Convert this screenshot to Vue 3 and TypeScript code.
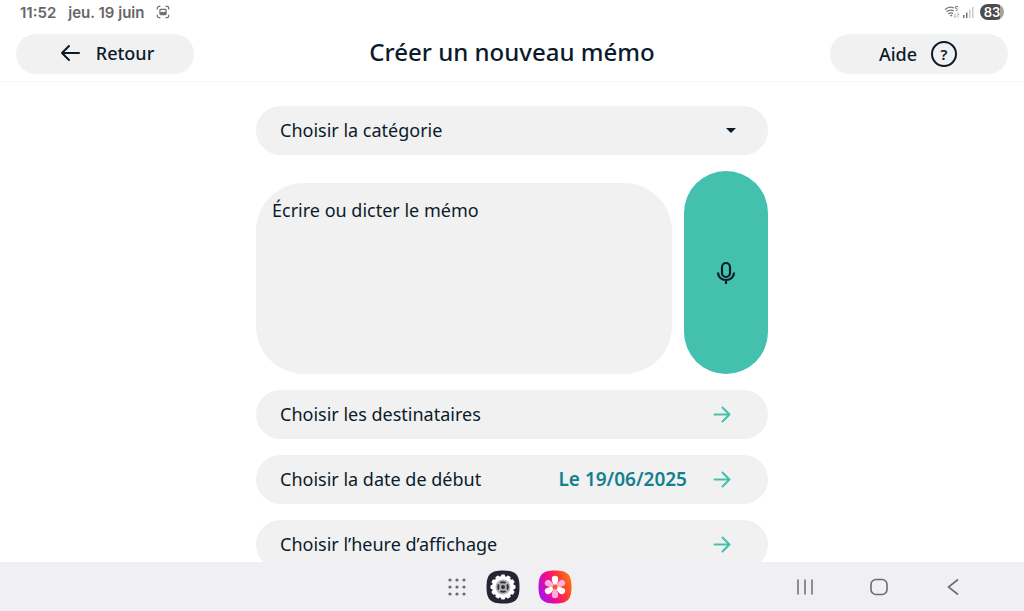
<script setup lang="ts">
import { ref } from 'vue'

interface Step {
  id: string
  label: string
  value?: string
}

const category = ref('')
const memo = ref('')
const categories = ['Rendez-vous', 'Médicaments', 'Courses']
const steps: Step[] = [
  { id: 'recipients', label: 'Choisir les destinataires' },
  { id: 'date', label: 'Choisir la date de début', value: 'Le 19/06/2025' },
  { id: 'time', label: 'Choisir l’heure d’affichage' },
]
const teeth = Array.from({ length: 12 }, (_, i) => i * 30)
const petals = Array.from({ length: 6 }, (_, i) => i * 60)
</script>

<template>
  <div class="screen">
    <div class="status">
      <span>11:52</span>
      <span class="day">jeu. 19 juin</span>
      <svg class="capture" width="14" height="14" viewBox="0 0 16 16" fill="none" stroke="#6d6d6d" stroke-width="1.4">
        <path d="M1.5 5V3.5a2 2 0 0 1 2-2H5M11 1.500h1.500a2 2 0 0 1 2 2V5M14.500 11v1.500a2 2 0 0 1-2 2H11M5 14.500H3.500a2 2 0 0 1-2-2V11" />
        <rect x="4.500" y="5" width="7" height="6" rx="1" />
        <path d="M5 8.500l2-1 1.500 1 1.500-1 1.500 1v2.500H5z" fill="#6d6d6d" stroke="none" />
      </svg>
      <div class="indicators">
        <svg width="16" height="14" viewBox="0 0 16 14" fill="none" stroke="#777" stroke-width="1.300">
          <path d="M1 4.500C4 1.800 7.500 1.800 10 3M2.500 6.800C5 4.800 7.500 4.800 10 6M4.200 9C6 7.600 7.500 7.600 9 8.600" />
          <path d="M6 10.200l1.200-.7 1.200.7-1.200 1.500z" fill="#777" stroke="none" />
          <path d="M14 1.500h-2.300v2c2.600-.5 2.600 2.500 0 2" stroke-width="1" />
          <path d="M11 8.500v4M9.800 11.300l1.200 1.200 1.200-1.200M14 12.500v-4M12.900 9.600L14 8.500l1.200 1.100" stroke="#aaa" stroke-width=".8" />
        </svg>
        <svg width="12" height="12" viewBox="0 0 12 12">
          <path d="M1 9h1.500v3H1zM4 6.500h1.500V12H4z" fill="#777" />
          <path d="M7 3.500h1.500V12H7zM10 1h1.500v11H10z" fill="#c8c8c8" />
        </svg>
        <span class="battery">83</span>
      </div>
    </div>

    <header class="header">
      <button type="button" class="pill">
        <svg width="20" height="18" viewBox="0 0 20 18" fill="none" stroke="#0b1b2b" stroke-width="2" stroke-linecap="round" stroke-linejoin="round">
          <path d="M19 9H2M9 2L2 9l7 7" />
        </svg>
        <span>Retour</span>
      </button>
      <h1>Créer un nouveau mémo</h1>
      <button type="button" class="pill help">
        <span>Aide</span>
        <span class="question">?</span>
      </button>
    </header>

    <main class="content">
      <form class="form" @submit.prevent>
        <div class="select-wrap">
          <select v-model="category" class="field" aria-label="Choisir la catégorie">
            <option value="" disabled>Choisir la catégorie</option>
            <option v-for="name in categories" :key="name" :value="name">{{ name }}</option>
          </select>
          <svg class="caret" width="10" height="5" viewBox="0 0 10 5"><path d="M0 0h10L5 5z" fill="#0b1b2b" /></svg>
        </div>

        <div class="memo">
          <textarea v-model="memo" aria-label="Écrire ou dicter le mémo" placeholder="Écrire ou dicter le mémo"></textarea>
          <button type="button" class="mic" aria-label="Dicter le mémo">
            <svg width="20" height="24" viewBox="0 0 20 24" fill="none" stroke="#0b1b2b" stroke-width="2.200">
              <rect x="6" y="2" width="8" height="14" rx="4" />
              <path d="M2 11.500c0 4.500 3.500 7.500 8 7.500s8-3 8-7.500M10 19v4" />
            </svg>
          </button>
        </div>

        <button v-for="step in steps" :key="step.id" type="button" class="field step">
          <span>{{ step.label }}</span>
          <span v-if="step.value" class="value">{{ step.value }}</span>
          <svg width="18" height="18" viewBox="0 0 18 18" fill="none" stroke="#43c1ae" stroke-width="2" stroke-linecap="round" stroke-linejoin="round">
            <path d="M1.500 9.500H16M9.500 2.500L16.500 9.500l-7 7" />
          </svg>
        </button>
      </form>
    </main>

    <nav class="taskbar" aria-label="Barre des tâches">
      <div class="apps">
        <button type="button" aria-label="Applications">
          <svg width="18" height="18" viewBox="0 0 18 18" fill="#69696c">
            <template v-for="y in [2, 9, 16]" :key="y">
              <circle v-for="x in [2, 9, 16]" :key="x" :cx="x" :cy="y" r="1.600" />
            </template>
          </svg>
        </button>
        <button type="button" aria-label="Paramètres">
          <svg width="34" height="34" viewBox="0 0 34 34">
            <path d="M17 .5C29.500.5 33.500 4.500 33.500 17S29.500 33.500 17 33.500.5 29.500.5 17 4.500.5 17 .5z" fill="#252633" />
            <g fill="#fff">
              <rect v-for="a in teeth" :key="a" x="15" y="4.500" width="4" height="6" rx="1" :transform="`rotate(${a} 17 17)`" />
              <circle cx="17" cy="17" r="11" />
            </g>
            <circle cx="17" cy="17" r="7.500" fill="#b4b4b7" />
            <circle cx="17" cy="17" r="4.800" fill="none" stroke="#30313b" stroke-width="2" />
            <path d="M12.500 12.500l9 9M21.500 12.500l-9 9" stroke="#b4b4b7" stroke-width="2" />
            <circle cx="17" cy="17" r="2" fill="#30313b" />
          </svg>
        </button>
        <button type="button" aria-label="Galerie">
          <svg width="34" height="34" viewBox="0 0 34 34">
            <defs>
              <linearGradient id="gallery" x1="0" y1=".7" x2="1" y2=".3">
                <stop offset="0" stop-color="#a514f5" />
                <stop offset=".4" stop-color="#f50a8a" />
                <stop offset=".7" stop-color="#fb3b36" />
                <stop offset="1" stop-color="#ff7412" />
              </linearGradient>
            </defs>
            <path d="M17 .5C29.500.5 33.500 4.500 33.500 17S29.500 33.500 17 33.500.5 29.500.5 17 4.500.5 17 .5z" fill="url(#gallery)" />
            <path
              v-for="(a, i) in petals" :key="a" d="M17 17C14.500 13 13.800 11 13.800 9a3.200 3.200 0 0 1 6.400 0c0 2-.7 4-3.200 8z"
              :fill="i % 2 ? '#ffb0dc' : '#fff'" :transform="`rotate(${a} 17 17)`"
            />
            <circle cx="17" cy="17" r="2.500" fill="#fb5a22" />
          </svg>
        </button>
      </div>
      <div class="system">
        <button type="button" aria-label="Applications récentes">
          <svg width="18" height="18" viewBox="0 0 18 18" stroke="#6c6c6f" stroke-width="1.500"><path d="M2 1.500v15M9 1.500v15M16 1.500v15" /></svg>
        </button>
        <button type="button" aria-label="Accueil">
          <svg width="18" height="18" viewBox="0 0 18 18" fill="none" stroke="#6c6c6f" stroke-width="1.600"><rect x="1" y="1.500" width="16" height="15" rx="5" /></svg>
        </button>
        <button type="button" aria-label="Précédent">
          <svg width="18" height="18" viewBox="0 0 18 18" fill="none" stroke="#6c6c6f" stroke-width="1.600"><path d="M14 1.500L4.500 9l9.500 7.500" /></svg>
        </button>
      </div>
    </nav>
  </div>
</template>

<style>
body {
  margin: 0;
}
</style>

<style scoped>
.screen {
  display: flex;
  flex-direction: column;
  height: 100vh;
  background: #fff;
  color: #0b1b2b;
  font-family: "Noto Sans", "Open Sans", sans-serif;
  font-size: 18px;
  overflow: hidden;
}
button,
select,
textarea {
  border: 0;
  margin: 0;
  padding: 0;
  font: inherit;
  color: inherit;
  background: none;
}
svg {
  display: block;
  flex: none;
}
.status {
  display: flex;
  align-items: center;
  flex: none;
  height: 24px;
  padding: 0 20px;
  color: #666;
  font-family: Inter, Roboto, sans-serif;
  font-size: 15px;
  font-weight: 600;
}
.day {
  margin-left: 12px;
}
.capture {
  margin-left: 12px;
}
.indicators {
  display: flex;
  align-items: center;
  gap: 2px;
  margin-left: auto;
}
.battery {
  margin-left: 4px;
  width: 24px;
  border-radius: 8px;
  background: linear-gradient(90deg, #4c4c4c 84%, #a2a2a2 84%);
  color: #fff;
  font-size: 13px;
  line-height: 16px;
  text-align: center;
}
.header {
  display: flex;
  align-items: center;
  justify-content: space-between;
  flex: none;
  padding: 10px 16px 7px;
  border-bottom: 1px solid #f6f6f6;
}
h1 {
  margin: 0;
  font-size: 24px;
  font-weight: 500;
  line-height: 36px;
  padding-bottom: 4px;
}
.pill {
  box-sizing: border-box;
  display: flex;
  align-items: center;
  justify-content: center;
  gap: 16px;
  width: 178px;
  height: 40px;
  padding: 0 0 2px 4px;
  border-radius: 20px;
  background: #f1f1f1;
  font-weight: 500;
}
.help {
  gap: 14px;
  padding: 0 2px 0 0;
}
.question {
  box-sizing: border-box;
  width: 26px;
  height: 26px;
  border: 2px solid #0b1b2b;
  border-radius: 50%;
  font-size: 15px;
  font-weight: 600;
  line-height: 22px;
}
.content {
  flex: 1;
  min-height: 0;
  overflow: hidden;
  padding-top: 24px;
}
.form {
  display: flex;
  flex-direction: column;
  gap: 16px;
  width: 50%;
  margin: 0 auto;
}
.select-wrap {
  display: grid;
  align-items: center;
}
.select-wrap > * {
  grid-area: 1 / 1;
}
.caret {
  justify-self: end;
  margin-right: 32px;
  pointer-events: none;
}
.field {
  box-sizing: border-box;
  width: 100%;
  height: 49px;
  padding: 0 24px 2px;
  border-radius: 25px;
  background: #f1f1f1;
  appearance: none;
}
.memo {
  display: flex;
  align-items: flex-end;
  gap: 12px;
}
textarea {
  box-sizing: border-box;
  flex: 1;
  min-width: 0;
  height: 191px;
  padding: 14px 16px;
  border-radius: 48px;
  background: #f1f1f1;
  line-height: 26px;
  resize: none;
}
textarea::placeholder {
  color: inherit;
  opacity: 1;
}
.mic {
  display: flex;
  align-items: center;
  justify-content: center;
  width: 84px;
  height: 203px;
  border-radius: 42px;
  background: #43c1ae;
}
.step {
  display: flex;
  align-items: center;
  gap: 26px;
  padding-right: 37px;
}
.step svg {
  margin-left: auto;
}
.value {
  margin-left: auto;
  color: #12818f;
  font-size: 19px;
  font-weight: 600;
}
.value + svg {
  margin-left: 0;
}
.taskbar {
  display: grid;
  grid-template-columns: 1fr auto 1fr;
  align-items: center;
  flex: none;
  height: 49px;
  background: #f0f0f2;
}
.apps {
  grid-column: 2;
  display: flex;
  align-items: center;
  gap: 18px;
  padding-right: 4px;
}
.apps button:first-child {
  padding-right: 2px;
}
.system {
  display: flex;
  justify-content: flex-end;
  gap: 56px;
  padding-right: 62px;
}
</style>
